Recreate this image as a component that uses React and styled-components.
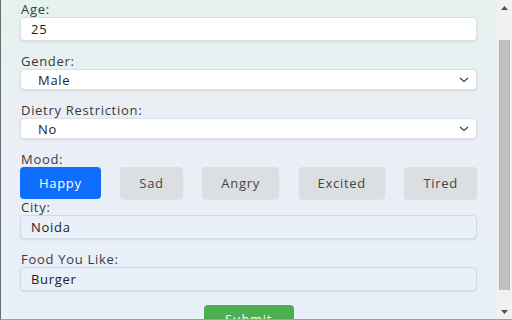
import React, { useLayoutEffect, useRef } from 'react';
import styled, { createGlobalStyle } from 'styled-components';

const GlobalStyle = createGlobalStyle`
  html, body {
    margin: 0;
    padding: 0;
    overflow: hidden;
  }
  * { box-sizing: border-box; }
`;

const moods = ['Happy', 'Sad', 'Angry', 'Excited', 'Tired'];

const Chevron = () => (
  <ChevronIcon width="10" height="6" viewBox="0 0 10 6">
    <path d="M1 1 L5 4.5 L9 1" fill="none" stroke="#444" strokeWidth="1.2" />
  </ChevronIcon>
);

const Arrow = ({ down }) => (
  <ArrowBox>
    <svg width="7" height="4" viewBox="0 0 7 4">
      <path d={down ? 'M0 0 H7 L3.5 4 Z' : 'M0 4 H7 L3.5 0 Z'} fill="#505050" />
    </svg>
  </ArrowBox>
);

export default function App() {
  const ref = useRef(null);

  useLayoutEffect(() => {
    if (ref.current) ref.current.scrollTop = 31;
  }, []);

  return (
    <>
      <GlobalStyle />
      <Window>
        <Viewport ref={ref}>
          <Form onSubmit={(e) => e.preventDefault()}>
            <Group>
              <Label>Age:</Label>
              <Input defaultValue="25" />
            </Group>
            <Group>
              <Label>Gender:</Label>
              <SelectWrap>
                <Select defaultValue="Male">
                  <option>Male</option>
                  <option>Female</option>
                </Select>
                <Chevron />
              </SelectWrap>
            </Group>
            <Group>
              <Label>Dietry Restriction:</Label>
              <SelectWrap>
                <Select defaultValue="No">
                  <option>No</option>
                  <option>Yes</option>
                </Select>
                <Chevron />
              </SelectWrap>
            </Group>
            <Group tight>
              <Label>Mood:</Label>
              <MoodRow>
                {moods.map((m) => (
                  <MoodButton type="button" key={m} active={m === 'Happy'}>
                    {m}
                  </MoodButton>
                ))}
              </MoodRow>
            </Group>
            <Group>
              <Label>City:</Label>
              <Input filled defaultValue="Noida" />
            </Group>
            <Group last>
              <Label>Food You Like:</Label>
              <Input filled defaultValue="Burger" />
            </Group>
            <SubmitRow>
              <Submit type="submit">Submit</Submit>
            </SubmitRow>
          </Form>
        </Viewport>
        <ScrollBar>
          <Arrow />
          <Track>
            <Thumb />
          </Track>
          <Arrow down />
        </ScrollBar>
      </Window>
    </>
  );
}

/* Styled Components */

const Window = styled.div`
  display: flex;
  width: 512px;
  height: 320px;
  border-left: 1px solid #66726e;
  border-bottom: 1px solid #9aa09e;
  background: linear-gradient(to bottom, #e5f2ee 0%, #ebeef6 45%, #e8f0f9 100%);
  font-family: 'Open Sans', 'Noto Sans', sans-serif;
  letter-spacing: 0.7px;
  color: #333;
`;

const Viewport = styled.div`
  flex: 1;
  height: 100%;
  overflow: hidden;
`;

const ScrollBar = styled.div`
  width: 15px;
  display: flex;
  flex-direction: column;
  background: #f1f1f1;
`;

const ArrowBox = styled.div`
  height: 15px;
  display: flex;
  align-items: center;
  justify-content: center;
`;

const Track = styled.div`
  flex: 1;
  padding: 25px 2px 0;
`;

const Thumb = styled.div`
  height: 250px;
  background: #c1c1c1;
  border-left: 1px solid #b4b4b4;
  border-right: 1px solid #b4b4b4;
`;

const Form = styled.form`
  padding: 32px 20px 8px 19px;
  display: flex;
  flex-direction: column;
`;

const Group = styled.div`
  display: flex;
  flex-direction: column;
  margin-bottom: ${(p) => (p.tight ? '0' : p.last ? '14px' : '12px')};
`;

const Label = styled.label`
  font-size: 13px;
  line-height: 16px;
  color: #3a3a3a;
  padding-left: 1px;
`;

const Input = styled.input`
  height: 24px;
  border: 1px solid ${(p) => (p.filled ? '#d3dae3' : '#dcdfe3')};
  border-radius: 4px;
  background: ${(p) => (p.filled ? '#e9f0fa' : '#fff')};
  box-shadow: 0 1px 2px rgba(0, 0, 0, 0.08);
  padding: 0 10px;
  font-family: inherit;
  letter-spacing: 0.7px;
  font-size: 13px;
  color: #222;
  outline: none;
`;

const SelectWrap = styled.div`
  position: relative;
  display: flex;
`;

const Select = styled.select`
  appearance: none;
  flex: 1;
  height: 21px;
  border: 1px solid #dcdfe3;
  border-radius: 4px;
  background: #fff;
  box-shadow: 0 1px 2px rgba(0, 0, 0, 0.08);
  padding: 0 17px;
  font-family: inherit;
  letter-spacing: 0.7px;
  font-size: 13px;
  color: #222;
  outline: none;
`;

const ChevronIcon = styled.svg`
  position: absolute;
  right: 8px;
  top: 8px;
  pointer-events: none;
`;

const MoodRow = styled.div`
  display: flex;
  justify-content: space-between;
`;

const MoodButton = styled.button`
  height: 32px;
  padding: 0 19px;
  border: none;
  border-radius: 4px;
  background: ${(p) => (p.active ? '#0d6efd' : '#dcdfe2')};
  color: ${(p) => (p.active ? '#fff' : '#444')};
  box-shadow: ${(p) => (p.active ? 'none' : '0 1px 2px rgba(0,0,0,0.06)')};
  font-family: inherit;
  letter-spacing: 0.7px;
  font-size: 13px;
  cursor: pointer;
`;

const SubmitRow = styled.div`
  display: flex;
  justify-content: center;
`;

const Submit = styled.button`
  width: 90px;
  height: 28px;
  border: none;
  border-radius: 4px;
  background: #4caf50;
  color: #fff;
  font-family: inherit;
  letter-spacing: 0.7px;
  font-size: 13px;
  cursor: pointer;
`;
